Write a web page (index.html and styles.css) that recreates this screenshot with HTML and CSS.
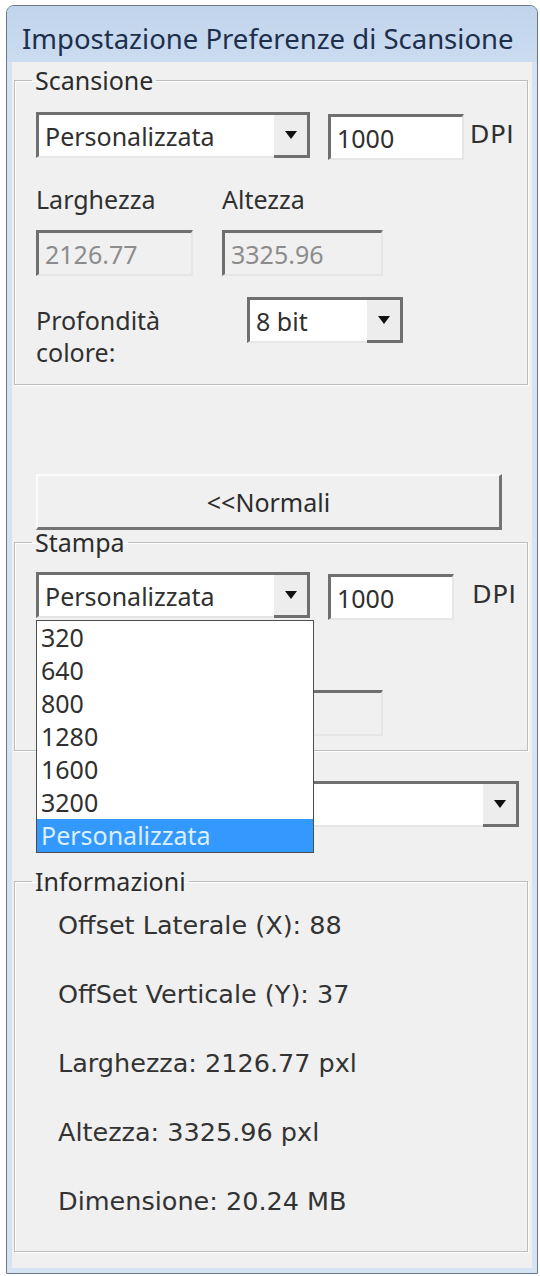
FILE: index.html
```html
<!DOCTYPE html>
<html lang="it">
<head>
  <meta charset="UTF-8" />
  <title>Impostazione Preferenze di Scansione</title>
  <meta name="viewport" content="width=device-width, initial-scale=1.0" />
  <link rel="stylesheet" href="styles.css">
</head>
<body>
  <div class="window">
    <!-- Barra del titolo -->
    <div class="titlebar">Impostazione Preferenze di Scansione</div>

    <div class="client">
      <!-- Scansione -->
      <fieldset class="group">
        <legend>Scansione</legend>
        <div class="row">
          <div class="combo combo-wide">
            <div class="combo-value">Personalizzata</div>
            <div class="combo-btn"><span class="arrow"></span></div>
          </div>
          <div class="field field-dpi">1000</div>
          <div class="unit">DPI</div>
        </div>
        <div class="size-grid">
          <div class="label">Larghezza</div>
          <div class="label">Altezza</div>
          <div class="field disabled">2126.77</div>
          <div class="field disabled">3325.96</div>
        </div>
        <div class="depth-row">
          <div class="depth-label">Profondità<br>colore:</div>
          <div class="combo combo-depth">
            <div class="combo-value">8 bit</div>
            <div class="combo-btn"><span class="arrow"></span></div>
          </div>
        </div>
      </fieldset>

      <div class="button">&lt;&lt;Normali</div>

      <!-- Stampa -->
      <fieldset class="group group-print">
        <legend>Stampa</legend>
        <div class="row">
          <div class="combo-wrap">
            <div class="combo combo-wide">
              <div class="combo-value">Personalizzata</div>
              <div class="combo-btn"><span class="arrow"></span></div>
            </div>
            <!-- Lista aperta -->
            <div class="dropdown-list">
              <div class="option">320</div>
              <div class="option">640</div>
              <div class="option">800</div>
              <div class="option">1280</div>
              <div class="option">1600</div>
              <div class="option">3200</div>
              <div class="option selected">Personalizzata</div>
            </div>
          </div>
          <div class="field field-dpi">1000</div>
          <div class="unit unit-print">DPI</div>
        </div>
        <!-- coperti dalla lista aperta -->
        <div class="size-grid">
          <div class="label"></div>
          <div class="label"></div>
          <div class="field disabled"></div>
          <div class="field disabled"></div>
        </div>
      </fieldset>

      <div class="combo combo-full">
        <div class="combo-value"></div>
        <div class="combo-btn"><span class="arrow"></span></div>
      </div>

      <!-- Informazioni -->
      <fieldset class="group group-info">
        <legend>Informazioni</legend>
        <div class="info-line">Offset Laterale (X): 88</div>
        <div class="info-line">OffSet Verticale (Y): 37</div>
        <div class="info-line">Larghezza: 2126.77 pxl</div>
        <div class="info-line">Altezza: 3325.96 pxl</div>
        <div class="info-line">Dimensione: 20.24 MB</div>
      </fieldset>
    </div>
  </div>
</body>
</html>
```

FILE: styles.css
```css
* {
  box-sizing: border-box;
}

body {
  margin: 0;
  background-color: #ffffff;
  font-family: "Noto Sans", "Open Sans", sans-serif;
  font-size: 25px;
  color: #303030;
}

.window {
  margin: 5px 2px 0 6px;
  width: 532px;
  height: 1269px;
  border: 1px solid #6b7786;
  border-radius: 8px 8px 0 0;
  background-color: #d6e3f2;
  padding: 0 5px 5px 5px;
  display: flex;
  flex-direction: column;
}

.titlebar {
  height: 56px;
  margin: 0 -5px;
  padding: 9px 0 0 15px;
  display: flex;
  align-items: center;
  font-size: 27.5px;
  color: #1d2f4c;
  background: linear-gradient(#c0d4ec, #cbdcf0);
  border-radius: 7px 7px 0 0;
  white-space: nowrap;
}

.client {
  flex: 1;
  background-color: #f0f0f0;
  padding: 0 4px 0 2px;
}

/* ========= GROUP BOX ========= */
.group {
  margin: 6px 0 0 0;
  padding: 20px 10px 16px 21px;
  min-width: 0;
  border: 1px solid #bdbdbd;
  box-shadow: inset 1px 1px 0 #ffffff, 1px 1px 0 #ffffff;
}

.group legend {
  padding: 0 3px;
  margin-left: -4px;
  line-height: 24px;
  color: #2c2c2c;
}

.group-print {
  margin-top: 0;
  padding-top: 18px;
  padding-bottom: 14px;
}

.group-info {
  margin-top: 42px;
  padding-top: 17px;
  padding-bottom: 35px;
}

/* ========= CONTROLLI ========= */
.row {
  display: flex;
  align-items: flex-start;
}

.combo {
  display: flex;
  height: 46px;
  background-color: #ffffff;
  border-top: 3px solid #6f6f6f;
  border-left: 3px solid #6f6f6f;
  border-bottom: 2px solid #e6e6e6;
}

.combo-value {
  flex: 1;
  padding-left: 6px;
  display: flex;
  align-items: center;
  white-space: nowrap;
}

.combo-btn {
  width: 36px;
  margin-bottom: -2px;
  background-color: #ededed;
  border-right: 3px solid #6f6f6f;
  border-bottom: 3px solid #6f6f6f;
  display: flex;
  align-items: center;
  justify-content: center;
}

.arrow {
  width: 0;
  height: 0;
  border-left: 6px solid transparent;
  border-right: 6px solid transparent;
  border-top: 8px solid #111111;
}

.combo-wide {
  width: 274px;
}

.combo-wrap {
  position: relative;
}

.field {
  height: 46px;
  padding-left: 6px;
  display: flex;
  align-items: center;
  background-color: #ffffff;
  border-top: 3px solid #6f6f6f;
  border-left: 3px solid #6f6f6f;
  border-right: 2px solid #e6e6e6;
  border-bottom: 2px solid #e6e6e6;
}

.field-dpi {
  width: 136px;
  margin: 2px 0 0 18px;
}

.unit {
  margin: 8px 0 0 6px;
  line-height: 30px;
  font-family: "DejaVu Sans", sans-serif;
  font-size: 25px;
  letter-spacing: 1px;
}

.unit-print {
  margin-left: 18px;
}

.field.disabled {
  background-color: #f0f0f0;
  color: #8c8c8c;
}

.size-grid {
  display: grid;
  grid-template-columns: 157px 161px;
  column-gap: 29px;
  row-gap: 16px;
  margin-top: 24px;
}

.label {
  height: 30px;
  line-height: 30px;
}

.depth-row {
  display: flex;
  align-items: flex-start;
  margin-top: 21px;
}

.depth-label {
  width: 211px;
  margin-top: 7px;
  line-height: 32px;
}

.combo-depth {
  width: 156px;
}

.button {
  margin: 89px 0 0 22px;
  width: 466px;
  height: 56px;
  display: flex;
  align-items: center;
  justify-content: center;
  background-color: #f0f0f0;
  border-top: 2px solid #fbfbfb;
  border-left: 2px solid #fbfbfb;
  border-right: 3px solid #737373;
  border-bottom: 3px solid #737373;
  color: #2c2c2c;
}

.combo-full {
  margin: 30px 0 0 22px;
  width: 483px;
}

/* ========= LISTA APERTA ========= */
.dropdown-list {
  position: absolute;
  top: calc(100% + 2px);
  left: 0;
  width: 278px;
  background-color: #ffffff;
  border: 1px solid #4d4d4d;
  z-index: 2;
}

.option {
  height: 33px;
  line-height: 33px;
  padding-left: 4px;
}

.option.selected {
  background-color: #3399ff;
  color: #dcefff;
}

/* ========= INFORMAZIONI ========= */
.info-line {
  padding-left: 22px;
  line-height: 30px;
  margin-bottom: 39px;
  font-family: "DejaVu Sans", sans-serif;
  font-size: 25.5px;
  color: #333333;
}

.info-line:last-child {
  margin-bottom: 0;
}
```
